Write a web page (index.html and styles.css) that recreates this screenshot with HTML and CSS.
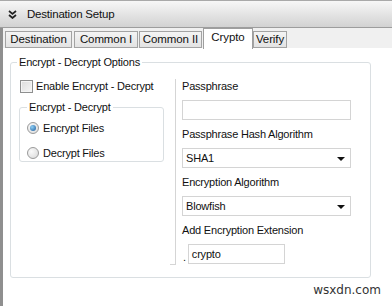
FILE: index.html
```html
<!DOCTYPE html>
<html>
<head>
<meta charset="utf-8">
<link rel="stylesheet" href="styles.css">
</head>
<body>
<div class="window">
  <div class="header">
    <svg class="hdr-icon" width="9" height="9" viewBox="0 0 9 9"><path d="M1 1 L4.5 4 L8 1 M1 5 L4.5 8 L8 5" fill="none" stroke="#222" stroke-width="1.7"/></svg>
    <span class="hdr-title">Destination Setup</span>
  </div>
  <div class="tabs">
    <div class="tab t-dest">Destination</div>
    <div class="tab t-c1">Common I</div>
    <div class="tab t-c2">Common II</div>
    <div class="tab active">Crypto</div>
    <div class="tab t-ver">Verify</div>
  </div>
  <div class="panel">
    <fieldset class="group outer">
      <legend>Encrypt - Decrypt Options</legend>
      <div class="cols">
        <div class="left">
          <label class="check"><span class="box"></span>Enable Encrypt - Decrypt</label>
          <fieldset class="group inner">
            <legend>Encrypt - Decrypt</legend>
            <div class="radio"><span class="dot on"></span>Encrypt Files</div>
            <div class="radio"><span class="dot"></span>Decrypt Files</div>
          </fieldset>
        </div>
        <div class="right">
          <div class="lbl">Passphrase</div>
          <div class="field"></div>
          <div class="lbl">Passphrase Hash Algorithm</div>
          <div class="field select">SHA1<span class="arrow"></span></div>
          <div class="lbl">Encryption Algorithm</div>
          <div class="field select">Blowfish<span class="arrow"></span></div>
          <div class="lbl">Add Encryption Extension</div>
          <div class="ext"><span class="dotch">.</span><div class="field small">crypto</div></div>
        </div>
      </div>
    </fieldset>
    <div class="watermark">wsxdn.com</div>
  </div>
</div>
</body>
</html>
```
FILE: styles.css
```css
html, body {
  margin: 0;
  padding: 0;
  background: #fff;
}
body {
  font-family: "Liberation Sans", Arial, sans-serif;
  font-size: 11px;
  letter-spacing: -0.2px;
  color: #111;
}
.window {
  width: 392px;
  height: 306px;
  display: flex;
  flex-direction: column;
  overflow: hidden;
}
.header {
  height: 26px;
  border-top: 1px solid #a9a9a9;
  border-bottom: 1px solid #9d9d9d;
  background: linear-gradient(#f7f7f7, #e6e6e6 45%, #d2d2d2);
  display: flex;
  align-items: center;
  padding-left: 8px;
  gap: 10px;
  flex-shrink: 0;
}
.hdr-icon { margin-top: 1px; }
.hdr-title { font-size: 11.5px; letter-spacing: -0.2px; color: #111; }
.tabs {
  height: 20px;
  display: flex;
  align-items: flex-end;
  padding-left: 2px;
  background: #f0f0f0;
  border-left: 3px solid #8f8f8f;
  flex-shrink: 0;
}
.tab {
  height: 17px;
  box-sizing: border-box;
  line-height: 15px;
  border: 1px solid #a3a3a3;
  background: linear-gradient(#f4f4f4, #e3e3e3);
  text-align: center;
  white-space: nowrap;
  font-size: 11.5px;
  letter-spacing: -0.1px;
  flex-shrink: 0;
}
.t-dest { width: 67px; margin-right: 2px; }
.t-c1 { width: 64px; margin-right: 1px; }
.t-c2 { width: 63px; margin-right: 1px; }
.tab.active {
  height: 21px;
  line-height: 17px;
  background: #fff;
  width: 50px;
  border-color: #9e9e9e;
  border-bottom: none;
  margin-bottom: -1px;
  position: relative;
  z-index: 1;
}
.t-ver { width: 34px; }
.panel {
  flex: 1;
  background: #fff;
  border-left: 3px solid #8f8f8f;
  padding: 7px 21px 0 7px;
  position: relative;
}
.group {
  border: 1px solid #dadfe2;
  border-radius: 3px;
  margin: 0;
  min-width: 0;
}
.group legend {
  padding: 0 2px;
  line-height: 14px;
}
.outer {
  padding: 10px 0 12px 0;
}
.outer > legend { margin-left: 6px; }
.cols {
  display: flex;
}
.left {
  width: 164px;
  padding-left: 9px;
  box-sizing: border-box;
}
.check {
  display: flex;
  align-items: center;
  height: 14px;
  gap: 3px;
}
.box {
  width: 11px;
  height: 11px;
  border: 1px solid #8e8f8f;
  background: linear-gradient(135deg, #dcdcdc, #f6f6f6);
  box-shadow: inset 0 0 0 1px #f4f4f4;
}
.inner {
  width: 145px;
  height: 62px;
  box-sizing: border-box;
  margin-top: 7px;
  margin-left: -1px;
  padding: 7px 0 0 7px;
}
.inner > legend { margin-left: 0; }
.radio {
  display: flex;
  align-items: center;
  height: 14px;
  gap: 4px;
  margin-bottom: 11px;
}
.dot {
  width: 12px;
  height: 12px;
  border-radius: 50%;
  border: 1px solid #9a9a9a;
  box-sizing: border-box;
  background: radial-gradient(circle at 35% 35%, #fafafa, #d8d8d8);
  position: relative;
}
.dot.on::after {
  content: "";
  position: absolute;
  left: 2px;
  top: 2px;
  width: 6px;
  height: 6px;
  border-radius: 50%;
  background: radial-gradient(circle at 35% 35%, #8fd0f5, #1d5a9b);
}
.right {
  border-left: 1px solid #d5d5d5;
  padding-left: 6px;
  width: 169px;
  height: 186px;
  position: relative;
}
.right::before {
  content: "";
  position: absolute;
  left: -6px;
  bottom: 0;
  width: 5px;
  border-top: 1px solid #d5d5d5;
}
.lbl {
  height: 14px;
  line-height: 14px;
  margin-bottom: 7px;
}
.field {
  height: 20px;
  box-sizing: border-box;
  border: 1px solid #d4d4d4;
  background: #fff;
  margin-bottom: 7px;
  line-height: 18px;
  padding-left: 3px;
  position: relative;
}
.select .arrow {
  position: absolute;
  right: 5px;
  top: 8px;
  width: 0;
  height: 0;
  border-left: 4px solid transparent;
  border-right: 4px solid transparent;
  border-top: 4px solid #111;
}
.ext {
  display: flex;
  align-items: flex-end;
  gap: 2px;
}
.dotch { line-height: 14px; padding-left: 1px; }
.field.small { width: 97px; margin-bottom: 0; }
.watermark {
  position: absolute;
  right: 11px;
  bottom: 9px;
  font-family: "DejaVu Sans", sans-serif;
  font-size: 12px;
  letter-spacing: 0;
  color: #333;
}
```
